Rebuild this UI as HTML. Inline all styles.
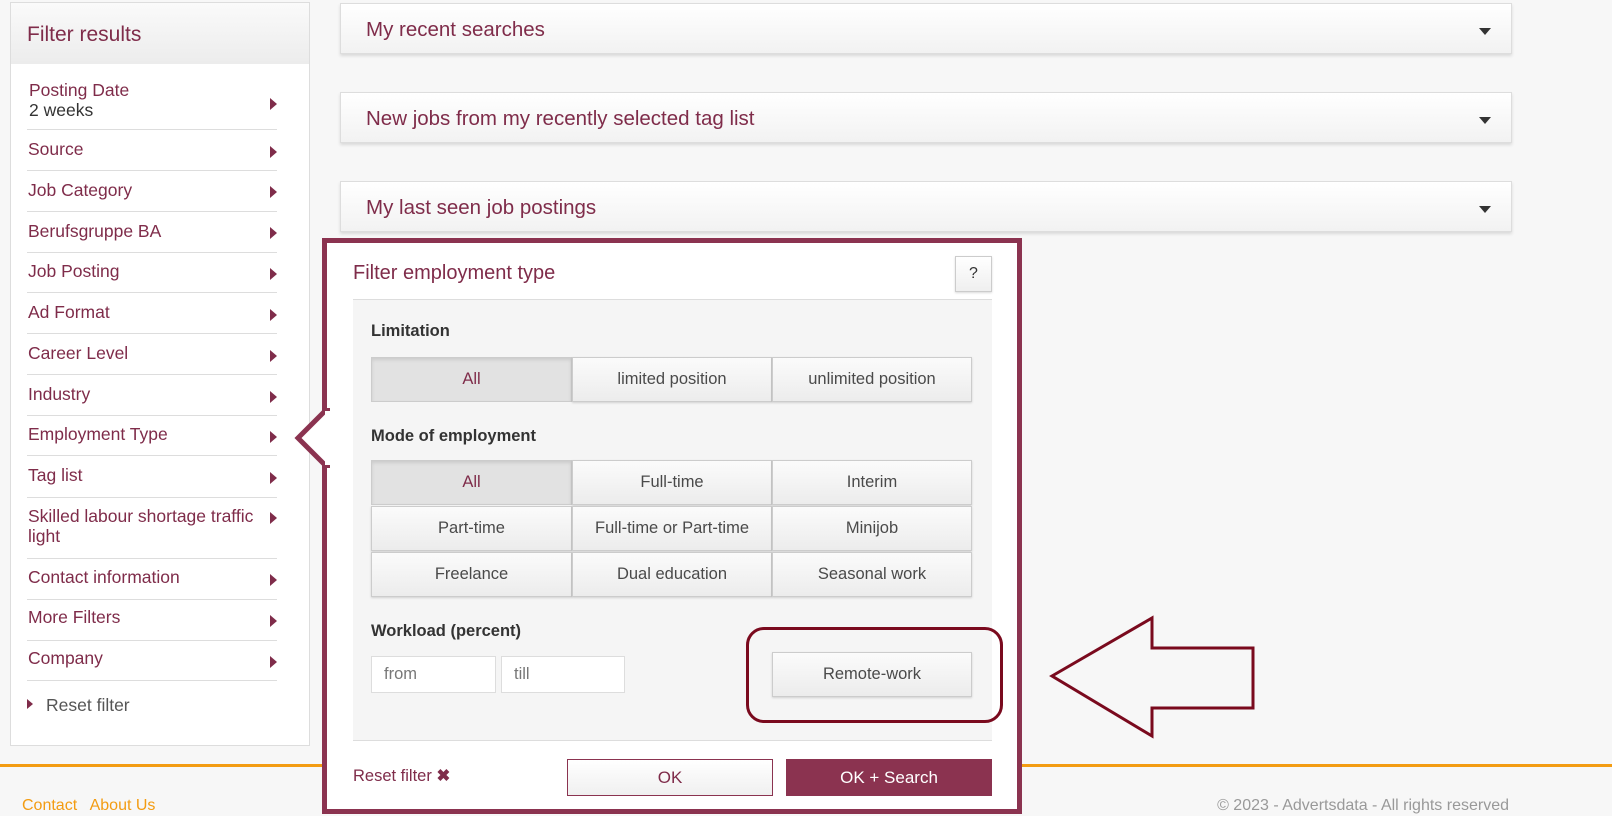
<!DOCTYPE html>
<html><head><meta charset="utf-8"><style>
*{box-sizing:border-box;margin:0;padding:0}
body{width:1612px;height:816px;background:#f7f7f7;font-family:"Liberation Sans",sans-serif;position:relative;overflow:hidden}
.a{position:absolute}
.mar{color:#7f2c4a}
.side{left:10px;top:2px;width:300px;height:744px;background:#fff;border:1px solid #ddd}
.sh{left:0;top:0;width:298px;height:61px;background:linear-gradient(#fafafa,#ececec)}
.it{left:18px;width:258px;font-size:17.5px;color:#7f2c4a;line-height:20px}
.ln{left:17px;width:250px;height:1px;background:#ddd}
.tri{width:0;height:0;border-top:6px solid transparent;border-bottom:6px solid transparent;border-left:7px solid #7f2c4a}
.acc{left:340px;width:1172px;height:51px;background:linear-gradient(#fff,#f2f2f2);border:1px solid #ddd;box-shadow:0 2px 3px rgba(0,0,0,.12)}
.acc span{position:absolute;left:25px;top:14px;font-size:20.5px;color:#7f2c4a}
.acc i{position:absolute;right:20px;top:24px;border-left:6px solid transparent;border-right:6px solid transparent;border-top:7px solid #333}
.btn{position:absolute;height:45px;background:linear-gradient(#fbfbfb,#ececec);border:1px solid #ccc;box-shadow:0 1px 2px rgba(0,0,0,.15);font-size:16.5px;color:#4a4a4a;text-align:center;line-height:43px}
.sel{background:#e2e2e2;color:#7f2c4a;box-shadow:inset 0 2px 3px rgba(0,0,0,.1)}
.lbl{font-size:16.5px;color:#333;font-weight:bold}
.inp{position:absolute;top:656px;height:37px;background:#fff;border:1px solid #ddd;font-size:16.5px;color:#777;padding-left:12px;line-height:35px}
</style></head><body>
<div class="a side">
 <div class="a sh"></div>
 <div class="a mar" style="left:16px;top:20px;font-size:21px">Filter results</div>
</div>
<div class="a it" style="left:29px;top:80px">Posting Date<br><span style="color:#333">2 weeks</span></div>
<div class="a ln" style="left:27px;top:129px"></div>
<div class="a it" style="left:28px;top:139px">Source</div><div class="a ln" style="left:27px;top:170px"></div>
<div class="a it" style="left:28px;top:180px">Job Category</div><div class="a ln" style="left:27px;top:211px"></div>
<div class="a it" style="left:28px;top:221px">Berufsgruppe BA</div><div class="a ln" style="left:27px;top:252px"></div>
<div class="a it" style="left:28px;top:261px">Job Posting</div><div class="a ln" style="left:27px;top:292px"></div>
<div class="a it" style="left:28px;top:302px">Ad Format</div><div class="a ln" style="left:27px;top:333px"></div>
<div class="a it" style="left:28px;top:343px">Career Level</div><div class="a ln" style="left:27px;top:374px"></div>
<div class="a it" style="left:28px;top:384px">Industry</div><div class="a ln" style="left:27px;top:415px"></div>
<div class="a it" style="left:28px;top:424px">Employment Type</div><div class="a ln" style="left:27px;top:455px"></div>
<div class="a it" style="left:28px;top:465px">Tag list</div><div class="a ln" style="left:27px;top:497px"></div>
<div class="a it" style="left:28px;top:506px">Skilled labour shortage traffic<br>light</div><div class="a ln" style="left:27px;top:558px"></div>
<div class="a it" style="left:28px;top:567px">Contact information</div><div class="a ln" style="left:27px;top:599px"></div>
<div class="a it" style="left:28px;top:607px">More Filters</div><div class="a ln" style="left:27px;top:640px"></div>
<div class="a it" style="left:28px;top:648px">Company</div><div class="a ln" style="left:27px;top:680px"></div>
<div class="a tri" style="left:27px;top:699px;border-top-width:5px;border-bottom-width:5px;border-left-width:6px"></div>
<div class="a it" style="left:46px;top:695px;color:#555">Reset filter</div>
<div class="a tri" style="left:270px;top:98px"></div>
<div class="a tri" style="left:270px;top:146px"></div>
<div class="a tri" style="left:270px;top:186px"></div>
<div class="a tri" style="left:270px;top:227px"></div>
<div class="a tri" style="left:270px;top:268px"></div>
<div class="a tri" style="left:270px;top:309px"></div>
<div class="a tri" style="left:270px;top:350px"></div>
<div class="a tri" style="left:270px;top:391px"></div>
<div class="a tri" style="left:270px;top:431px"></div>
<div class="a tri" style="left:270px;top:472px"></div>
<div class="a tri" style="left:270px;top:512px"></div>
<div class="a tri" style="left:270px;top:574px"></div>
<div class="a tri" style="left:270px;top:615px"></div>
<div class="a tri" style="left:270px;top:656px"></div>

<div class="a acc" style="top:3px"><span>My recent searches</span><i></i></div>
<div class="a acc" style="top:92px"><span>New jobs from my recently selected tag list</span><i></i></div>
<div class="a acc" style="top:181px"><span>My last seen job postings</span><i></i></div>

<div class="a" style="left:0;top:764px;width:1612px;height:3px;background:#f39c12"></div>
<div class="a" style="left:22px;top:797px;font-size:16px;color:#f39c12">Contact&nbsp;&nbsp; About Us</div>
<div class="a" style="right:103px;top:797px;font-size:16px;color:#999">© 2023 - Advertsdata - All rights reserved</div>

<div class="a" style="left:322px;top:238px;width:700px;height:576px;background:#fff;border:5px solid #8b3350"></div>
<svg class="a" style="left:294px;top:408px" width="36" height="60"><polygon points="34,0 4,30 34,60" fill="#fff" stroke="#8b3350" stroke-width="5"/><rect x="31" y="3" width="6" height="54" fill="#fff"/></svg>
<div class="a mar" style="left:353px;top:262px;font-size:20px">Filter employment type</div>
<div class="a" style="left:955px;top:256px;width:37px;height:36px;background:linear-gradient(#fff,#efefef);border:1px solid #ccc;box-shadow:0 1px 2px rgba(0,0,0,.15);text-align:center;line-height:34px;font-size:16px;color:#333">?</div>
<div class="a" style="left:353px;top:299px;width:639px;height:442px;background:#f5f5f5;border-top:1px solid #ddd;border-bottom:1px solid #ddd"></div>
<div class="a lbl" style="left:371px;top:322px">Limitation</div>
<div class="btn sel" style="left:371px;top:357px;width:201px">All</div>
<div class="btn" style="left:572px;top:357px;width:200px">limited position</div>
<div class="btn" style="left:772px;top:357px;width:200px">unlimited position</div>
<div class="a lbl" style="left:371px;top:427px">Mode of employment</div>
<div class="btn sel" style="left:371px;top:460px;width:201px">All</div>
<div class="btn" style="left:572px;top:460px;width:200px">Full-time</div>
<div class="btn" style="left:772px;top:460px;width:200px">Interim</div>
<div class="btn" style="left:371px;top:506px;width:201px">Part-time</div>
<div class="btn" style="left:572px;top:506px;width:200px">Full-time or Part-time</div>
<div class="btn" style="left:772px;top:506px;width:200px">Minijob</div>
<div class="btn" style="left:371px;top:552px;width:201px">Freelance</div>
<div class="btn" style="left:572px;top:552px;width:200px">Dual education</div>
<div class="btn" style="left:772px;top:552px;width:200px">Seasonal work</div>
<div class="a lbl" style="left:371px;top:622px">Workload (percent)</div>
<div class="inp" style="left:371px;width:125px">from</div>
<div class="inp" style="left:501px;width:124px">till</div>
<div class="btn" style="left:772px;top:652px;width:200px">Remote-work</div>
<div class="a" style="left:746px;top:627px;width:257px;height:96px;border:3px solid #7a0a1e;border-radius:18px"></div>
<svg class="a" style="left:1048px;top:615px" width="210" height="125"><polygon points="4,61 104,3 104,33 205,33 205,93 104,93 104,121" fill="none" stroke="#7a0a1e" stroke-width="3"/></svg>
<div class="a" style="left:353px;top:766px;font-size:16.5px;color:#7f2c4a">Reset filter <b style="color:#7f2c4a">✖</b></div>
<div class="a" style="left:567px;top:759px;width:206px;height:37px;background:linear-gradient(#fff,#f0f0f0);border:1px solid #8b3350;text-align:center;line-height:35px;font-size:17px;color:#7f2c4a">OK</div>
<div class="a" style="left:786px;top:759px;width:206px;height:37px;background:#8b3350;text-align:center;line-height:37px;font-size:17px;color:#fff">OK + Search</div>
</body></html>
